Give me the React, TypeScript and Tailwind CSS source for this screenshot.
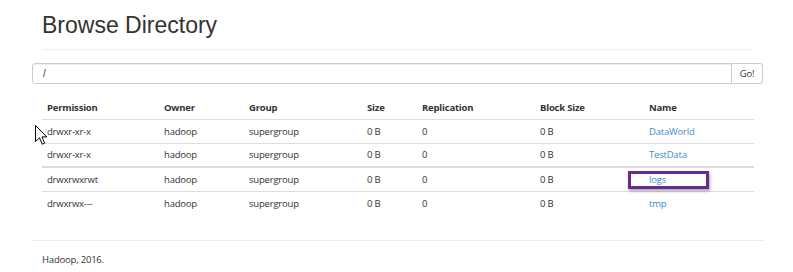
import React, { type FC } from "react";

type Row = {
  permission: string;
  owner: string;
  group: string;
  size: string;
  replication: string;
  blockSize: string;
  name: string;
};

const rows: Row[] = [
  { permission: "drwxr-xr-x", owner: "hadoop", group: "supergroup", size: "0 B", replication: "0", blockSize: "0 B", name: "DataWorld" },
  { permission: "drwxr-xr-x", owner: "hadoop", group: "supergroup", size: "0 B", replication: "0", blockSize: "0 B", name: "TestData" },
  { permission: "drwxrwxrwt", owner: "hadoop", group: "supergroup", size: "0 B", replication: "0", blockSize: "0 B", name: "logs" },
  { permission: "drwxrwx---", owner: "hadoop", group: "supergroup", size: "0 B", replication: "0", blockSize: "0 B", name: "tmp" },
];

// column widths, left to right
const cols = ["w-[117px]", "w-[85px]", "w-[118px]", "w-[55px]", "w-[118px]", "w-[109px]", "flex-1"];

const headers = ["Permission", "Owner", "Group", "Size", "Replication", "Block Size", "Name"];

const Cursor: FC = () => (
  <svg
    className="absolute left-[35px] top-[125px] pointer-events-none"
    width="13"
    height="21"
    viewBox="0 0 13 21"
  >
    <path
      d="M0.5 0.5 L0.5 16.5 L4.5 12.8 L7.2 19.2 L9.6 18.2 L7 11.9 L12 11.9 Z"
      fill="#ffffff"
      stroke="#000000"
      strokeWidth="1"
      strokeLinejoin="miter"
    />
  </svg>
);

const App: FC = () => {
  return (
    <div className="relative w-[793px] h-[272px] bg-white overflow-hidden text-[#333] font-['Open_Sans',sans-serif]">
      {/* page header */}
      <h1 className="ml-[42px] pt-[10px] h-[39px] text-[23px] leading-[30px] font-normal font-['Liberation_Sans',Arial,sans-serif] text-[#333]">
        Browse Directory
      </h1>
      <div className="ml-[42px] mt-[10px] w-[711px] border-t border-[#eeeeee]" />

      {/* path input */}
      <div className="ml-[32px] mt-[13px] flex w-[731px] h-[21px]">
        <div className="w-[700px] h-full border border-[#cccccc] rounded-l-[3px] shadow-[inset_0_1px_1px_rgba(0,0,0,0.075)] flex items-center pl-[10px] text-[10px] font-['Liberation_Sans',Arial,sans-serif]">
          /
        </div>
        <button className="w-[31px] h-full border border-l-0 border-[#cccccc] rounded-r-[3px] bg-white text-[9.5px] tracking-[-0.2px] leading-none text-[#333]">
          Go!
        </button>
      </div>

      {/* listing */}
      <div className="ml-[42px] mt-[12px] w-[712px] text-[9.5px] tracking-[-0.2px]">
        <div className="flex h-[24px] pt-[1px] items-center border-b border-[#dddddd] font-bold">
          {headers.map((h, i) => (
            <div key={h} className={`${cols[i]} pl-[5px]`}>
              {h}
            </div>
          ))}
        </div>
        {rows.map((r, idx) => (
          <div
            key={r.name}
            className={
              idx === 1
                ? "flex h-[24px] pt-[1px] items-center border-b-2 border-[#dddddd]"
                : idx === 3
                  ? "flex h-[24px] pt-[1px] items-center"
                  : "flex h-[24px] pt-[1px] items-center border-b border-[#dddddd]"
            }
          >
            <div className={`${cols[0]} pl-[5px]`}>{r.permission}</div>
            <div className={`${cols[1]} pl-[5px]`}>{r.owner}</div>
            <div className={`${cols[2]} pl-[5px]`}>{r.group}</div>
            <div className={`${cols[3]} pl-[5px]`}>{r.size}</div>
            <div className={`${cols[4]} pl-[5px]`}>{r.replication}</div>
            <div className={`${cols[5]} pl-[5px]`}>{r.blockSize}</div>
            <div className={`${cols[6]} pl-[5px]`}>
              <a href="#" className="text-[#428bca]">
                {r.name}
              </a>
            </div>
          </div>
        ))}
      </div>

      {/* footer */}
      <div className="ml-[32px] mt-[24px] w-[732px] border-t border-[#eeeeee] pt-[9px] pl-[10px] text-[9.5px] tracking-[-0.2px] leading-[20px]">
        Hadoop, 2016.
      </div>

      {/* annotation box round "logs" */}
      <div className="absolute left-[628px] top-[171px] w-[81px] h-[18px] border-[3px] border-[#652c8e] shadow-[1px_2px_3px_rgba(0,0,0,0.35)] pointer-events-none" />

      <Cursor />
    </div>
  );
};

export default App;
